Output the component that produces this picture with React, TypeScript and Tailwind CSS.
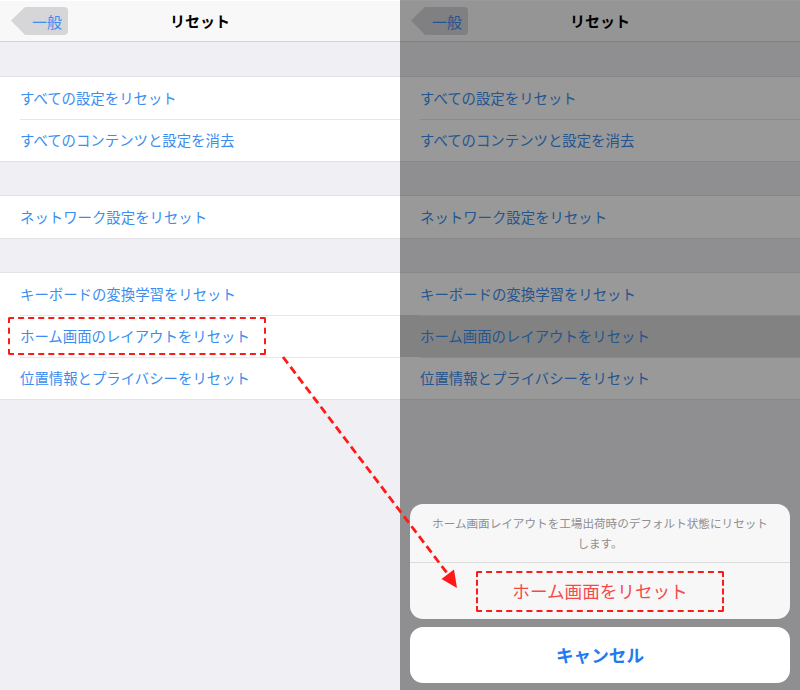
const groups = [
  ["すべての設定をリセット", "すべてのコンテンツと設定を消去"],
  ["ネットワーク設定をリセット"],
  [
    "キーボードの変換学習をリセット",
    "ホーム画面のレイアウトをリセット",
    "位置情報とプライバシーをリセット",
  ],
];

const target = "ホーム画面のレイアウトをリセット";

function BackButton() {
  return (
    <div className="relative ml-[11px] flex h-[28px] w-[58px] items-center">
      <svg className="absolute inset-0" width="58" height="28" viewBox="0 0 58 28">
        <path d="M0 13.5 L14 0 H53 Q57 0 57 4 V24 Q57 28 53 28 H14 Z" fill="#d6d6d9" />
      </svg>
      <span className="relative ml-[21px] text-[15px] leading-none text-[#3b8ef0]">一般</span>
    </div>
  );
}

function SettingsScreen({ marked, pressed }: { marked?: boolean; pressed?: boolean }) {
  return (
    <div className="flex h-full flex-col bg-[#efeff4]">
      <div className="flex h-[42px] items-center border-t border-b border-t-white border-b-[#d4d4d8] bg-[#f8f8f8]">
        <BackButton />
        <div className="flex-1 pr-[69px] text-center text-[15px] font-bold text-black">リセット</div>
      </div>
      {groups.map((rows, gi) => (
        <div
          key={gi}
          className={`${gi === 0 ? "mt-[34px]" : "mt-[33px]"} border-y border-[#e3e3e7] bg-white`}
        >
          {rows.map((label, ri) => {
            const hot = label === target;
            return (
              <div
                key={label}
                className={`relative flex h-[42px] items-center ${hot && pressed ? "bg-[#d9d9d9]" : ""}`}
              >
                {ri > 0 && (
                  <div className="absolute top-0 right-0 left-[20px] h-px bg-[#e6e6ea]" />
                )}
                <span className="pl-[20px] text-[14.4px] text-[#3b8ef0]">{label}</span>
                {hot && marked && (
                  <div className="absolute top-[2px] left-[8px] h-[38px] w-[258px] rounded-[2px] border-[2.5px] border-dashed border-[#ff1a1a]" />
                )}
              </div>
            );
          })}
        </div>
      ))}
    </div>
  );
}

function ActionSheet() {
  return (
    <div className="absolute right-[10px] bottom-[7px] left-[10px] flex flex-col gap-[8px]">
      <div className="overflow-hidden rounded-[13px] bg-[#f7f7f7]">
        <div className="flex h-[59px] flex-col items-center justify-center border-b border-[#dcdcdc] px-4 text-center text-[11.6px] leading-[20px] text-[#8e8e93]">
          <span>ホーム画面レイアウトを工場出荷時のデフォルト状態にリセット</span>
          <span>します。</span>
        </div>
        <div className="flex h-[56px] items-center justify-center">
          <div className="flex h-[41px] w-[248px] items-center justify-center rounded-[2px] border-[2.5px] border-dashed border-[#ff1a1a]">
            <span className="text-[17.6px] text-[#f54a4a]">ホーム画面をリセット</span>
          </div>
        </div>
      </div>
      <div className="flex h-[56px] items-center justify-center rounded-[13px] bg-white">
        <span className="text-[17.6px] font-bold text-[#1f7cf0]">キャンセル</span>
      </div>
    </div>
  );
}

export default function App() {
  return (
    <div
      className="relative flex h-[690px] w-[800px] overflow-hidden bg-white"
      style={{ fontFamily: '"Noto Sans CJK JP", "Noto Sans", sans-serif' }}
    >
      <div className="h-full w-[400px]">
        <SettingsScreen marked />
      </div>
      <div className="relative h-full w-[400px]">
        <SettingsScreen pressed />
        <div className="absolute inset-0 bg-black/40" />
        <ActionSheet />
      </div>
      <svg
        className="pointer-events-none absolute inset-0"
        width="800"
        height="690"
        viewBox="0 0 800 690"
      >
        <line
          x1="283"
          y1="357"
          x2="447"
          y2="573"
          stroke="#ff1a1a"
          strokeWidth="2.8"
          strokeDasharray="8 4.5"
        />
        <polygon points="457,588 441.5,579 454,569.5" fill="#ff1a1a" />
      </svg>
    </div>
  );
}
